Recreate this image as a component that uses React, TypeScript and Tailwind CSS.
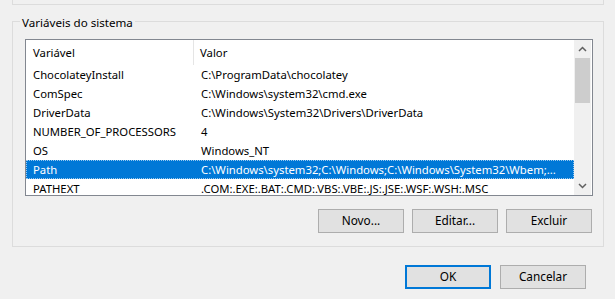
import React from "react";

const rows: [string, string][] = [
  ["ChocolateyInstall", "C:\\ProgramData\\chocolatey"],
  ["ComSpec", "C:\\Windows\\system32\\cmd.exe"],
  ["DriverData", "C:\\Windows\\System32\\Drivers\\DriverData"],
  ["NUMBER_OF_PROCESSORS", "4"],
  ["OS", "Windows_NT"],
  ["Path", "C:\\Windows\\system32;C:\\Windows;C:\\Windows\\System32\\Wbem;..."],
  ["PATHEXT", ".COM:.EXE:.BAT:.CMD:.VBS:.VBE:.JS:.JSE:.WSF:.WSH:.MSC"],
];

function Btn({ label, primary }: { label: string; primary?: boolean }) {
  return (
    <div
      className={
        "flex items-center justify-center bg-[#e1e1e1] text-black " +
        (primary ? "border-2 border-[#0078d7]" : "border border-[#adadad]")
      }
      style={{ width: 86, height: 24 }}
    >
      {label}
    </div>
  );
}

export default function App() {
  return (
    <div
      className="relative w-[615px] h-[299px] overflow-hidden bg-[#f0f0f0] text-[11.3px] leading-none text-black"
      style={{ fontFamily: '"Noto Sans", "Open Sans", sans-serif' }}
    >
      <div className="ml-[12px] w-[592px] h-[5px] border-l border-r border-b border-[#dcdcdc]" />
      <div className="relative ml-[12px] mt-[16px] w-[592px] h-[226px] border border-[#dcdcdc]">
        <div className="absolute left-[7px] top-[-7px] bg-[#f0f0f0] px-[2px] leading-[15px] text-[11.6px]">
          Variáveis do sistema
        </div>
        <div className="ml-[12px] mt-[17px] w-[568px] h-[157px] border border-[#828790] bg-white flex">
          <div className="flex-1 flex flex-col overflow-hidden">
            <div className="flex h-[25px] shrink-0 items-center">
              <div className="w-[168px] pl-[7px] h-full flex items-center border-r border-[#e5e5e5]">Variável</div>
              <div className="pl-[6px]">Valor</div>
            </div>
            {rows.map(([k, v]) => {
              const sel = k === "Path";
              return (
                <div
                  key={k}
                  className={
                    "flex h-[19px] shrink-0 items-center whitespace-nowrap " +
                    (sel ? "bg-[#0078d7] text-white outline outline-1 outline-dotted outline-offset-[-1px] outline-[#99c9ef]" : "")
                  }
                >
                  <div className="w-[168px] pl-[7px]">{k}</div>
                  <div className="pl-[7px]">{v}</div>
                </div>
              );
            })}
          </div>
          <div className="w-[17px] bg-[#f0f0f0] flex flex-col shrink-0 mr-[1px]">
            <div className="h-[18px] flex items-center justify-center">
              <svg width="9" height="6" viewBox="0 0 9 6">
                <path d="M1 5 L4.5 1.5 L8 5" fill="none" stroke="#606060" strokeWidth="1.5" />
              </svg>
            </div>
            <div className="h-[45px] mx-[1px] bg-[#cdcdcd]" />
            <div className="flex-1" />
            <div className="h-[18px] flex items-center justify-center">
              <svg width="9" height="6" viewBox="0 0 9 6">
                <path d="M1 1 L4.5 4.5 L8 1" fill="none" stroke="#606060" strokeWidth="1.5" />
              </svg>
            </div>
          </div>
        </div>
        <div className="flex justify-end gap-[8px] mr-[11px] mt-[13px] text-[11.8px]">
          <Btn label="Novo..." />
          <Btn label="Editar..." />
          <Btn label="Excluir" />
        </div>
      </div>
      <div className="flex justify-end gap-[9px] mr-[29px] mt-[18px] text-[11.8px]">
        <Btn label="OK" primary />
        <Btn label="Cancelar" />
      </div>
    </div>
  );
}
